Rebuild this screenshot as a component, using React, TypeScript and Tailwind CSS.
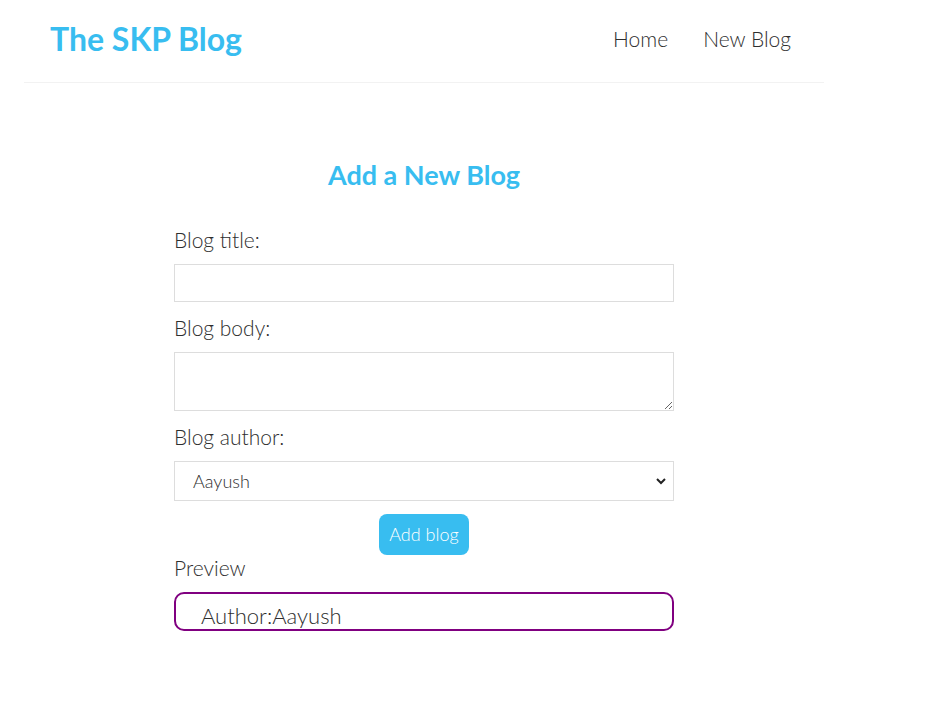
import React from "react";

export default function App() {
  return (
    <div
      className="min-h-screen w-full bg-white text-[#2e2e2e]"
      style={{ fontFamily: "Lato, 'Noto Sans', sans-serif" }}
    >
      <div className="ml-[24px] w-[800px]">
        <nav className="flex h-[83px] items-center border-b border-[#f2f2f2] pb-[5px] pl-[26px] pr-[33px]">
          <h1 className="text-[32px] font-bold leading-[40px] text-[#38bdf0]">The SKP Blog</h1>
          <div className="ml-auto flex gap-[35px] text-[21px] font-light leading-[28px] text-[#2e2e2e]">
            <a href="#">Home</a>
            <a href="#">New Blog</a>
          </div>
        </nav>

        <div className="mx-auto w-[500px]">
          <h2 className="mt-[77px] text-center text-[27px] font-bold leading-[30px] text-[#38bdf0]">
            Add a New Blog
          </h2>
          <form className="mt-[35px]" onSubmit={(e) => e.preventDefault()}>
            <label className="block text-[21px] font-light leading-[30px]">Blog title:</label>
            <input
              type="text"
              className="mt-[9px] block h-[38px] w-full border border-[#ddd] px-[10px] outline-none"
            />
            <label className="mt-[11px] block text-[21px] font-light leading-[30px]">Blog body:</label>
            <textarea className="mt-[9px] block h-[59px] w-full border border-[#ddd] px-[10px] py-[6px] outline-none" />
            <label className="mt-[11px] block text-[21px] font-light leading-[30px]">Blog author:</label>
            <div className="relative mt-[9px] h-[40px] w-full">
              <select
                defaultValue="Aayush"
                className="block h-[40px] w-full appearance-none border border-[#ddd] pl-[18px] text-[18px] font-light text-[#2e2e2e] outline-none"
              >
                <option value="Aayush">Aayush</option>
              </select>
              <svg
                className="pointer-events-none absolute right-[7px] top-[14px]"
                width="12"
                height="12"
                viewBox="0 0 12 12"
              >
                <path d="M2 4 L6 8 L10 4" fill="none" stroke="#222" strokeWidth="2" />
              </svg>
            </div>
            <div className="mt-[13px] flex justify-center">
              <button
                type="submit"
                className="h-[41px] w-[90px] rounded-[8px] bg-[#38bdf0] text-[18px] font-light text-white"
              >
                Add blog
              </button>
            </div>
            <p className="mt-[1px] text-[21px] font-light leading-[24px]">Preview</p>
            <div className="mt-[12px] h-[39px] overflow-hidden rounded-[10px] border-2 border-[#800080] pl-[25px]">
              <p className="text-[22px] font-light leading-[44px]">Author:Aayush</p>
            </div>
          </form>
        </div>
      </div>
    </div>
  );
}
